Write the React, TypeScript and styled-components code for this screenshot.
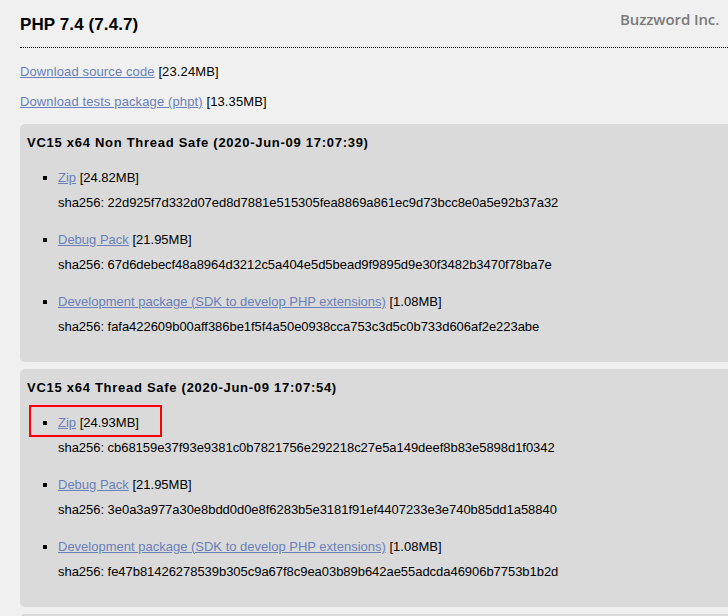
import React from "react";
import styled, { createGlobalStyle } from "styled-components";

const Global = createGlobalStyle`
  html, body { margin: 0; padding: 0; background: #f0f0f0; overflow: hidden; }
  body { font-family: "Liberation Sans", Arial, sans-serif; font-size: 13px; color: #000; }
`;

const Page = styled.div`
  position: relative;
  width: 780px;
  height: 616px;
  overflow: hidden;
  padding: 13px 0 0 20px;
  box-sizing: border-box;
`;

const Watermark = styled.div`
  position: absolute;
  top: 9px;
  left: 620px;
  font-family: "Open Sans", "Noto Sans", sans-serif;
  font-size: 15px;
  font-weight: 600;
  color: #7b7b7b;
  letter-spacing: -0.1px;
`;

const Title = styled.h1`
  margin: 0;
  font-size: 17px;
  line-height: 24px;
  font-weight: bold;
  letter-spacing: 0.1px;
  padding-bottom: 10px;
  border-bottom: 1px dotted #000;
`;

const TopLinks = styled.div`
  display: flex;
  flex-direction: column;
  gap: 10px;
  padding-top: 13.5px;
  padding-bottom: 12.5px;
  letter-spacing: 0.12px;
`;

const Line = styled.div`
  line-height: 20px;
`;

const Link = styled.a`
  color: #6a7fba;
  text-decoration: underline;
`;

const Box = styled.section<{ $empty?: boolean }>`
  background: #dadada;
  border-radius: 5px 0 0 5px;
  padding: 9px 7px 8.5px;
  margin-bottom: 7px;
  min-height: ${(p) => (p.$empty ? "60px" : "0")};
`;

const BoxTitle = styled.h3`
  margin: 0;
  font-size: 13px;
  line-height: 20px;
  font-weight: bold;
  letter-spacing: 0.72px;
`;

const List = styled.ul`
  margin: 14.5px 0 0;
  padding: 0 0 0 31px;
  list-style: none;
`;

const Item = styled.li`
  position: relative;
  margin-bottom: 17px;
  &::before {
    content: "";
    position: absolute;
    left: -15px;
    top: 8px;
    width: 4px;
    height: 4px;
    background: #000;
  }
`;

const Sha = styled.div`
  line-height: 20px;
  margin-top: 5px;
  letter-spacing: -0.04px;
`;

const Highlight = styled.div`
  position: absolute;
  left: -29px;
  top: -7.5px;
  width: 133px;
  height: 32px;
  border: 2px solid #f00;
  box-sizing: border-box;
  pointer-events: none;
`;

type Pkg = { name: string; size: string; sha: string; mark?: boolean };
type Build = { title: string; pkgs: Pkg[] };

const builds: Build[] = [
  {
    title: "VC15 x64 Non Thread Safe (2020-Jun-09 17:07:39)",
    pkgs: [
      { name: "Zip", size: "[24.82MB]", sha: "22d925f7d332d07ed8d7881e515305fea8869a861ec9d73bcc8e0a5e92b37a32" },
      { name: "Debug Pack", size: "[21.95MB]", sha: "67d6debecf48a8964d3212c5a404e5d5bead9f9895d9e30f3482b3470f78ba7e" },
      { name: "Development package (SDK to develop PHP extensions)", size: "[1.08MB]", sha: "fafa422609b00aff386be1f5f4a50e0938cca753c3d5c0b733d606af2e223abe" },
    ],
  },
  {
    title: "VC15 x64 Thread Safe (2020-Jun-09 17:07:54)",
    pkgs: [
      { name: "Zip", size: "[24.93MB]", sha: "cb68159e37f93e9381c0b7821756e292218c27e5a149deef8b83e5898d1f0342", mark: true },
      { name: "Debug Pack", size: "[21.95MB]", sha: "3e0a3a977a30e8bdd0d0e8f6283b5e3181f91ef4407233e3e740b85dd1a58840" },
      { name: "Development package (SDK to develop PHP extensions)", size: "[1.08MB]", sha: "fe47b81426278539b305c9a67f8c9ea03b89b642ae55adcda46906b7753b1b2d" },
    ],
  },
];

export default function App() {
  return (
    <>
      <Global />
      <Page>
        <Watermark>Buzzword Inc.</Watermark>
        <Title>PHP 7.4 (7.4.7)</Title>
        <TopLinks>
          <Line>
            <Link href="#">Download source code</Link> [23.24MB]
          </Line>
          <Line>
            <Link href="#">Download tests package (phpt)</Link> [13.35MB]
          </Line>
        </TopLinks>
        {builds.map((b) => (
          <Box key={b.title}>
            <BoxTitle>{b.title}</BoxTitle>
            <List>
              {b.pkgs.map((p) => (
                <Item key={p.name}>
                  {p.mark && <Highlight />}
                  <Line>
                    <Link href="#">{p.name}</Link> {p.size}
                  </Line>
                  <Sha>sha256: {p.sha}</Sha>
                </Item>
              ))}
            </List>
          </Box>
        ))}
        <Box $empty />
      </Page>
    </>
  );
}
